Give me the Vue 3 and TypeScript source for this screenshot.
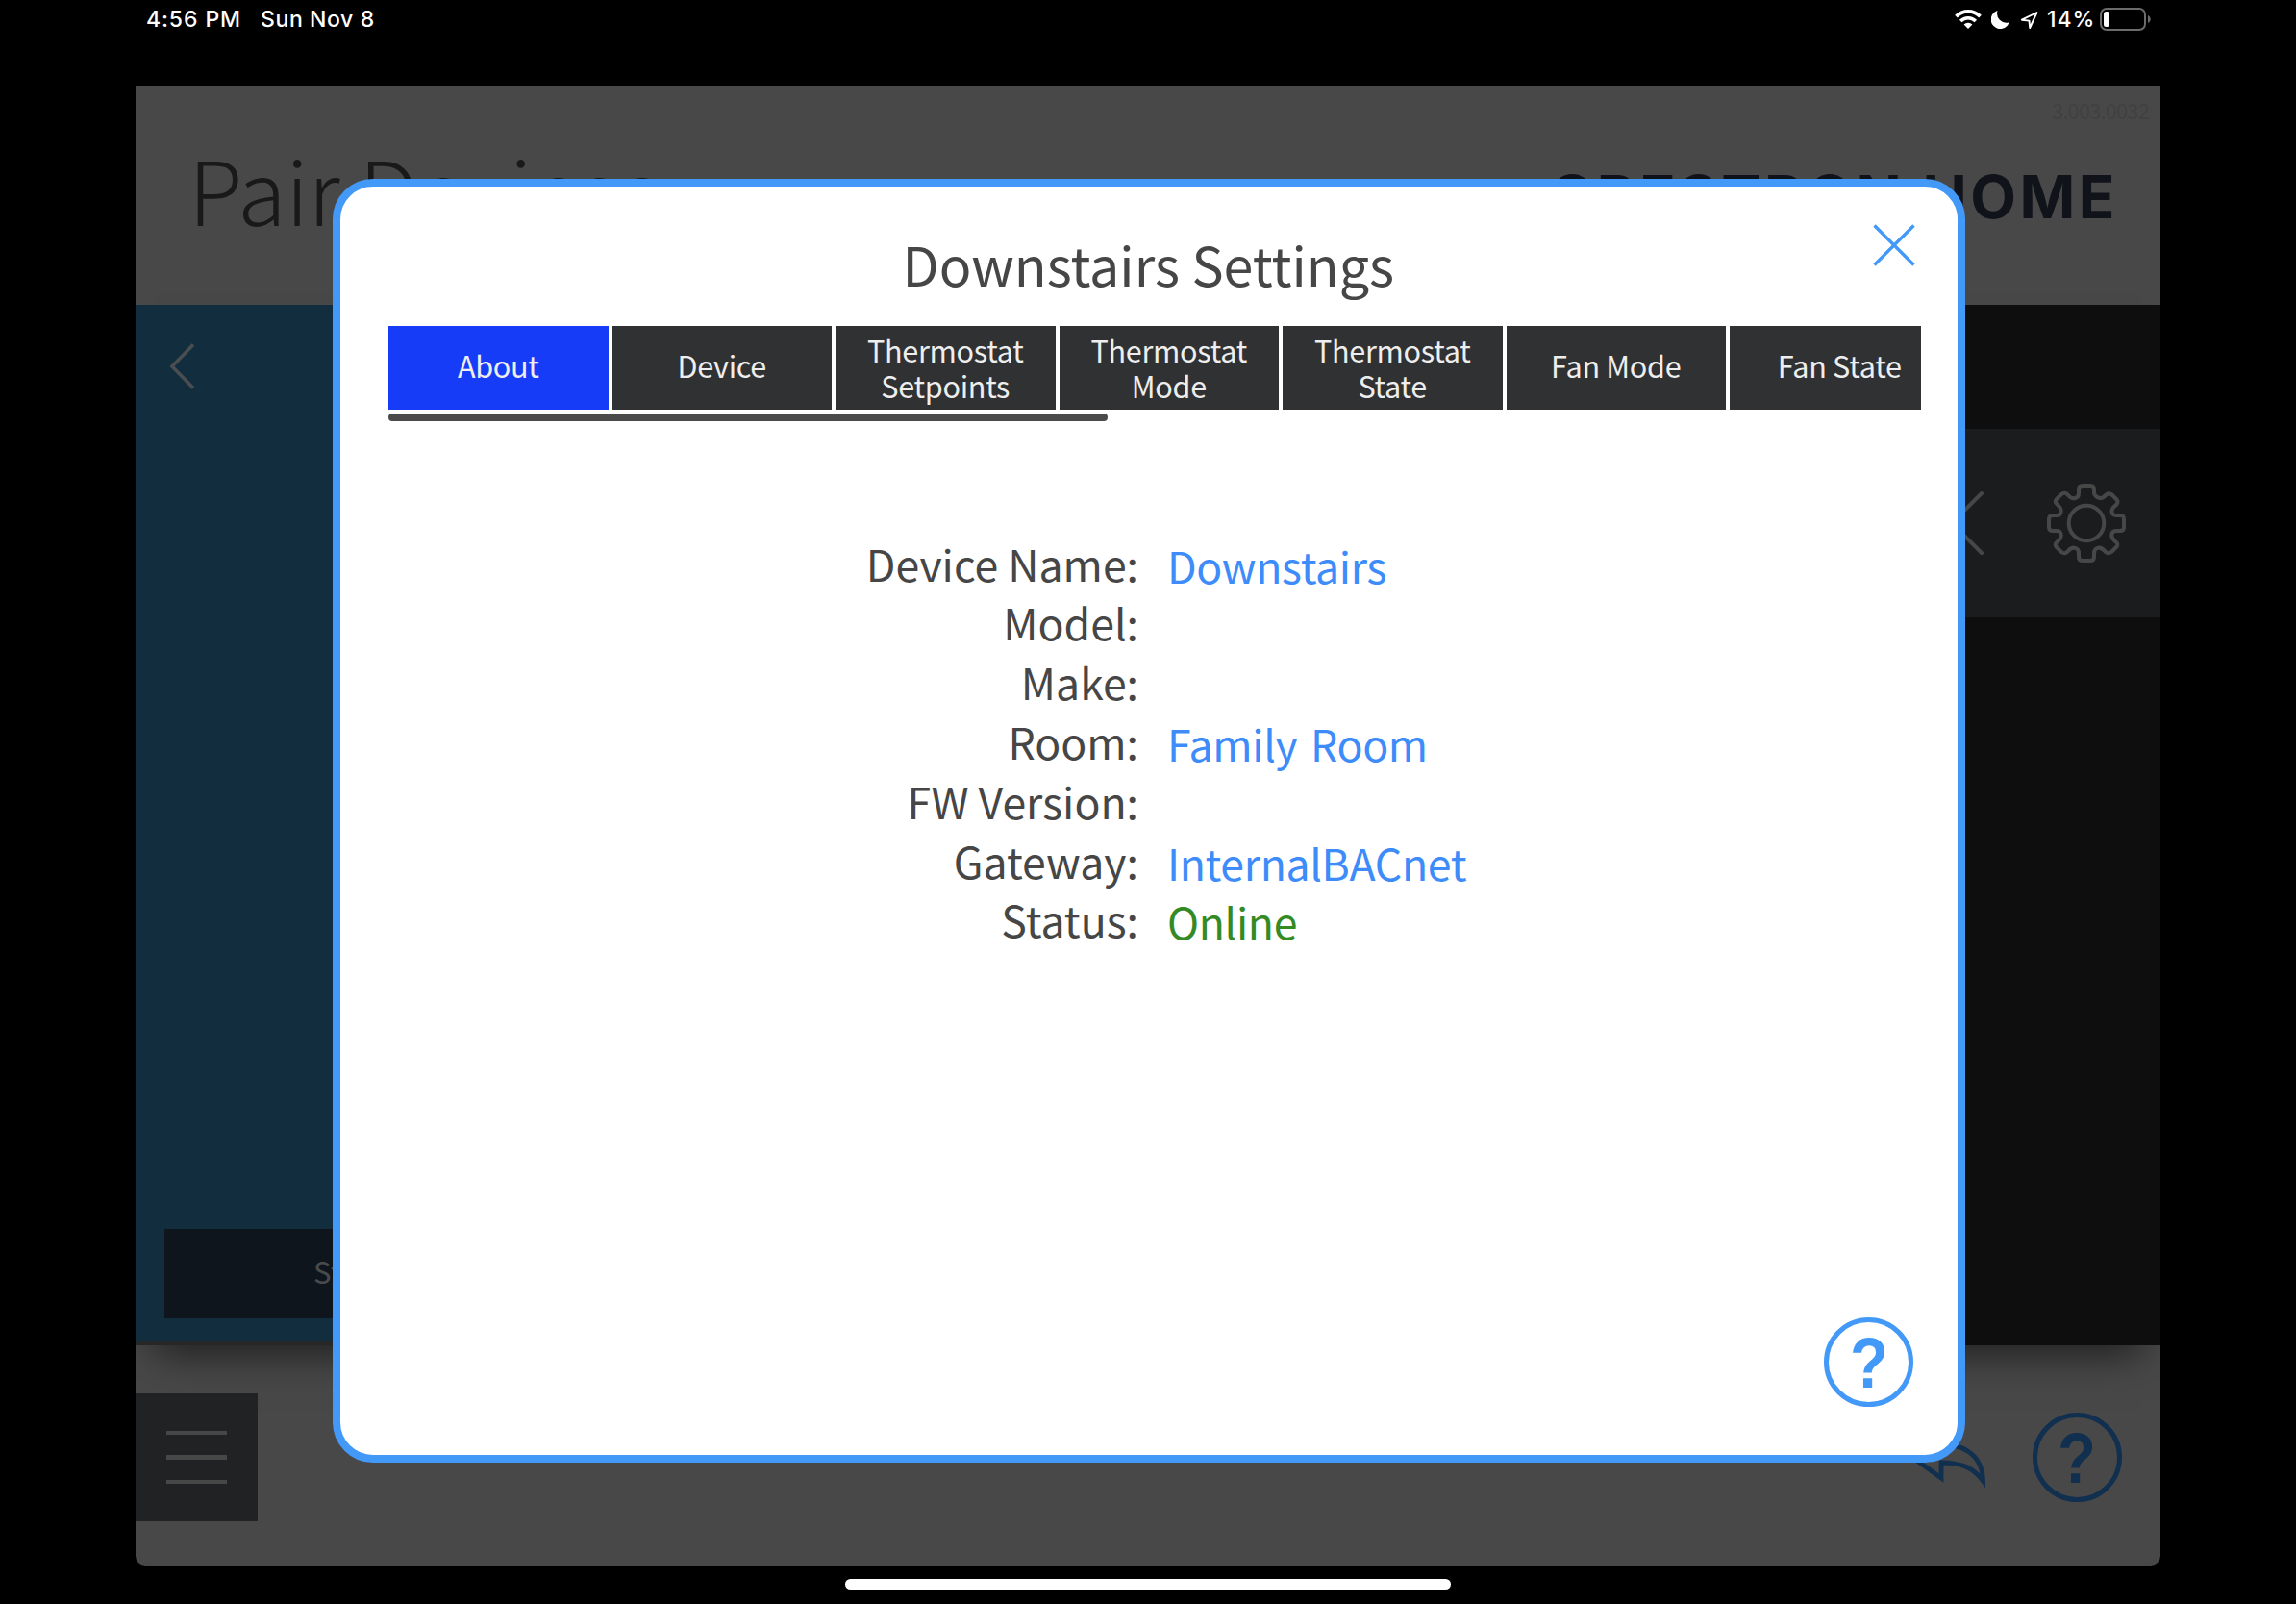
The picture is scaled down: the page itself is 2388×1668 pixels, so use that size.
<script setup lang="ts">
interface Tab {
  lines: string[]
  active?: boolean
}

interface InfoRow {
  label: string
  value: string
  online?: boolean
}

const tabs: Tab[] = [
  { lines: ['About'], active: true },
  { lines: ['Device'] },
  { lines: ['Thermostat', 'Setpoints'] },
  { lines: ['Thermostat', 'Mode'] },
  { lines: ['Thermostat', 'State'] },
  { lines: ['Fan Mode'] },
  { lines: ['Fan State'] },
]

const rows: InfoRow[] = [
  { label: 'Device Name:', value: 'Downstairs' },
  { label: 'Model:', value: '' },
  { label: 'Make:', value: '' },
  { label: 'Room:', value: 'Family Room' },
  { label: 'FW Version:', value: '' },
  { label: 'Gateway:', value: 'InternalBACnet' },
  { label: 'Status:', value: 'Online', online: true },
]
</script>

<template>
  <div class="screen">
    <header class="status">
      <span class="time">4:56 PM</span>
      <span class="date">Sun Nov 8</span>
      <span class="spacer"></span>
      <svg class="wifi" width="28" height="20" viewBox="0 0 28 20">
        <path d="M1.500 7.200a17.500 17.500 0 0 1 25 0" fill="none" stroke="#fff" stroke-width="3.800" />
        <path d="M6.200 12a10.800 10.800 0 0 1 15.600 0" fill="none" stroke="#fff" stroke-width="3.500" />
        <path d="M14 20l-4.400-4.500a6.200 6.200 0 0 1 8.800 0z" fill="#fff" />
      </svg>
      <svg class="moon" width="19" height="19" viewBox="0 0 19 19">
        <path d="M6.600 0A9.700 9.700 0 1 0 18.600 12.200 9.600 9.600 0 0 1 6.600 0z" fill="#fff" />
      </svg>
      <svg class="loc" width="20" height="20" viewBox="0 0 20 20">
        <path d="M17.500 2L1.800 9.700 9.500 10.600 10.200 18z" fill="none" stroke="#fff" stroke-width="1.900" stroke-linejoin="round" />
      </svg>
      <span class="percent">14%</span>
      <svg class="battery" width="54" height="24" viewBox="0 0 54 24">
        <rect x="1" y="1" width="46" height="22" rx="6" fill="none" stroke="#6b6b6b" stroke-width="2" />
        <rect x="4" y="4" width="6" height="16" rx="2.500" fill="#fff" />
        <path d="M50 8c3.600 1.600 3.600 6.400 0 8z" fill="#6b6b6b" />
      </svg>
    </header>

    <main class="app">
      <section class="banner">
        <h1 class="page-title">Pair Devices</h1>
        <div class="brand">
          <span class="version">3.003.0032</span>
          <span class="logo">CRESTRON HOME</span>
        </div>
      </section>

      <section class="body">
        <aside class="side">
          <svg class="back" width="30" height="52" viewBox="0 0 30 52">
            <path d="M26 3.500L4 26 26 48.500" fill="none" stroke="#4a4e50" stroke-width="3.600" />
          </svg>
          <div class="side-btn">Start</div>
        </aside>
        <div class="list">
          <div class="item">
            <svg width="40" height="70" viewBox="0 0 40 70">
              <path d="M36 4L5 35 36 66" fill="none" stroke="#464747" stroke-width="4" stroke-linecap="round" />
            </svg>
            <svg class="gear" width="86" height="86" viewBox="-43 -43 86 86">
              <g fill="none" stroke="#464747" stroke-width="4">
                <circle r="18.300" />
                <path
                  d="M-8-33V-35Q-8-39-4-39H4Q8-39 8-35V-31C9-27 15-24 19-28Q22-32 26-30L31-25Q34-22 31-19C24-14 26-8 31-8H36Q39-8 39-4V4Q39 8 35 8H31C26 8 24 14 30 19Q34 22 31 25L26 30Q22 33 19 29C14 23 8 26 8 31V35Q8 39 4 39H-4Q-8 39-8 35V31C-8 26-14 23-19 29Q-22 33-26 30L-31 25Q-34 22-30 19C-24 14-26 8-31 8H-35Q-39 8-39 4V-4Q-39-8-35-8H-31C-26-8-24-14-30-19Q-34-22-31-25L-26-30Q-22-33-19-29C-14-23-8-26-8-31Z"
                  stroke-linejoin="round"
                />
              </g>
            </svg>
          </div>
        </div>
      </section>

      <footer class="foot">
        <div class="menu"><i></i><i></i><i></i></div>
        <div class="foot-actions">
          <svg class="undo" width="92" height="80" viewBox="0 0 92 80">
            <path
              d="M39 11V31C62 31 82 42 82.500 69 72 55 60 50 39 50V66L3 40Z"
              fill="none"
              stroke="#112f4f"
              stroke-width="4.800"
            />
          </svg>
          <div class="help dim"><span>?</span></div>
        </div>
      </footer>
    </main>

    <div class="indicator"></div>

    <div class="modal">
      <svg class="close" width="46" height="46" viewBox="0 0 46 46">
        <path d="M2.500 2.500L43.500 43.500M43.500 2.500L2.500 43.500" stroke="#4399f7" stroke-width="3.400" />
      </svg>
      <h2 class="modal-title">Downstairs Settings</h2>
      <nav class="tabs">
        <div
          v-for="(tab, i) in tabs"
          :key="i"
          class="tab"
          :class="{ active: tab.active, single: tab.lines.length === 1 }"
        >
          <span v-for="line in tab.lines" :key="line">{{ line }}</span>
        </div>
      </nav>
      <div class="scrollbar"></div>
      <div class="info">
        <div v-for="row in rows" :key="row.label" class="row">
          <span class="label">{{ row.label }}</span>
          <span class="value" :class="{ online: row.online }">{{ row.value }}</span>
        </div>
      </div>
      <div class="help modal-help"><span>?</span></div>
    </div>
  </div>
</template>

<style>
body {
  margin: 0;
  background: #000;
}
</style>

<style scoped>
* {
  box-sizing: border-box;
}
.screen {
  position: relative;
  width: 2388px;
  height: 1668px;
  overflow: hidden;
  background: #000;
  display: flex;
  flex-direction: column;
  align-items: center;
  font-family: 'Noto Sans CJK SC', 'Noto Sans', sans-serif;
  white-space: nowrap;
}
h1,
h2 {
  margin: 0;
  font-weight: 400;
}
.status {
  width: 100%;
  height: 88.500px;
  flex: none;
  display: flex;
  align-items: flex-start;
  padding: 8px 150px 0 152px;
  color: #fff;
  font: 450 23px/24px Inter, sans-serif;
}
.time {
  width: 119px;
  letter-spacing: 0.9px;
}
.date {
  letter-spacing: 0.6px;
}
.spacer {
  flex: 1;
}
.wifi {
  margin-top: 2px;
}
.moon {
  margin: 3px 0 0 10px;
}
.loc {
  margin: 3px 0 0 11px;
}
.percent {
  width: 50px;
  margin-left: 8px;
  margin-right: 5px;
  letter-spacing: 0.9px;
}
.app {
  width: 2106px;
  height: 1539.500px;
  flex: none;
  background: #484848;
  border-radius: 0 0 10px 10px;
  overflow: hidden;
  display: flex;
  flex-direction: column;
}
.banner {
  height: 228.500px;
  flex: none;
  display: flex;
  justify-content: space-between;
  padding: 0 12px 0 55px;
}
.page-title {
  margin-top: 56px;
  font-size: 92px;
  line-height: 100px;
  font-weight: 300;
  color: #191919;
  letter-spacing: -0.3px;
}
.brand {
  display: flex;
  flex-direction: column;
  align-items: flex-end;
}
.version {
  margin-top: 12px;
  font-size: 22px;
  line-height: 26px;
  letter-spacing: -0.9px;
  color: #414141;
}
.logo {
  margin: 46.500px 32px 0 0;
  font: 700 62px/64px Inter, sans-serif;
  letter-spacing: 3.500px;
  color: #10131a;
}
.body {
  position: relative;
  height: 1082px;
  flex: none;
  display: flex;
  background: #262727;
  box-shadow: 0 28px 40px -20px rgba(0, 0, 0, 0.6);
}
.side {
  width: 700px;
  height: 1078px;
  background: #112d3e;
  display: flex;
  flex-direction: column;
  justify-content: space-between;
  padding: 38px 30px 24.500px;
}
.back {
  margin-left: 4px;
}
.side-btn {
  height: 92.500px;
  padding-left: 155px;
  background: #0e151d;
  color: #484a4b;
  font-size: 31px;
  line-height: 87px;
}
.list {
  flex: 1;
  padding-top: 129px;
  background: #0e0e0e;
}
.item {
  height: 196px;
  background: #1b1c1d;
  display: flex;
  align-items: center;
  justify-content: flex-end;
  padding-right: 34px;
}
.gear {
  margin-left: 62px;
}
.foot {
  flex: 1;
  display: flex;
  justify-content: space-between;
  padding: 49.500px 40.500px 0 0;
}
.menu {
  position: relative;
  width: 127px;
  height: 133.500px;
  background: #212224;
  display: flex;
  flex-direction: column;
  gap: 21px;
  padding: 39px 32px;
}
.menu i {
  height: 5.400px;
  background: #464747;
}
.foot-actions {
  display: flex;
  align-items: flex-start;
  padding-top: 20px;
}
.undo {
  margin: 2px 42px 0 0;
}
.help {
  width: 93px;
  height: 93px;
  border: 5.400px solid #4399f7;
  border-radius: 50%;
  color: #4399f7;
  font: 700 75px/84px 'Liberation Sans', sans-serif;
  text-align: center;
}
.help span {
  display: inline-block;
  transform: scaleX(0.87);
}
.help.dim {
  border-color: #112f4f;
  color: #112f4f;
}
.indicator {
  width: 630px;
  height: 11px;
  margin-top: 14px;
  flex: none;
  border-radius: 6px;
  background: #fff;
}
.modal {
  position: absolute;
  left: 346px;
  top: 185.500px;
  width: 1698px;
  height: 1335.500px;
  border: 8.500px solid #4399f7;
  border-radius: 42px;
  background: #fff;
  padding: 50px 37.500px 0 50px;
  display: flex;
  flex-direction: column;
}
.close {
  position: absolute;
  right: 43px;
  top: 38.500px;
}
.modal-title {
  margin-left: -14px;
  text-align: center;
  font-size: 55.600px;
  line-height: 61px;
  color: #464646;
}
.tabs {
  margin-top: 34.500px;
  width: 1594px;
  height: 87px;
  flex: none;
  display: flex;
  gap: 4px;
  overflow: hidden;
}
.tab {
  width: 228.500px;
  flex: none;
  display: flex;
  flex-direction: column;
  align-items: center;
  justify-content: center;
  background: #303133;
  color: #eee;
  font-size: 30.600px;
  line-height: 37px;
  letter-spacing: -0.3px;
}
.tab.single {
  padding-bottom: 3.500px;
}
.tab.active {
  background: #173cf8;
}
.scrollbar {
  width: 748px;
  height: 8px;
  margin-top: 4px;
  flex: none;
  border-radius: 4px;
  background: #4a4a4a;
}
.info {
  margin-top: 116.700px;
  font-size: 44.600px;
  line-height: 61.800px;
}
.row {
  display: grid;
  grid-template-columns: 780px 1fr;
  column-gap: 30px;
  height: 61.800px;
}
.label {
  text-align: right;
  color: #464646;
}
.value {
  margin-top: 2px;
  color: #3d8cfa;
  letter-spacing: -0.350px;
  word-spacing: 4px;
}
.value.online {
  color: #348a24;
}
.modal-help {
  position: absolute;
  right: 46px;
  bottom: 50px;
}
</style>
